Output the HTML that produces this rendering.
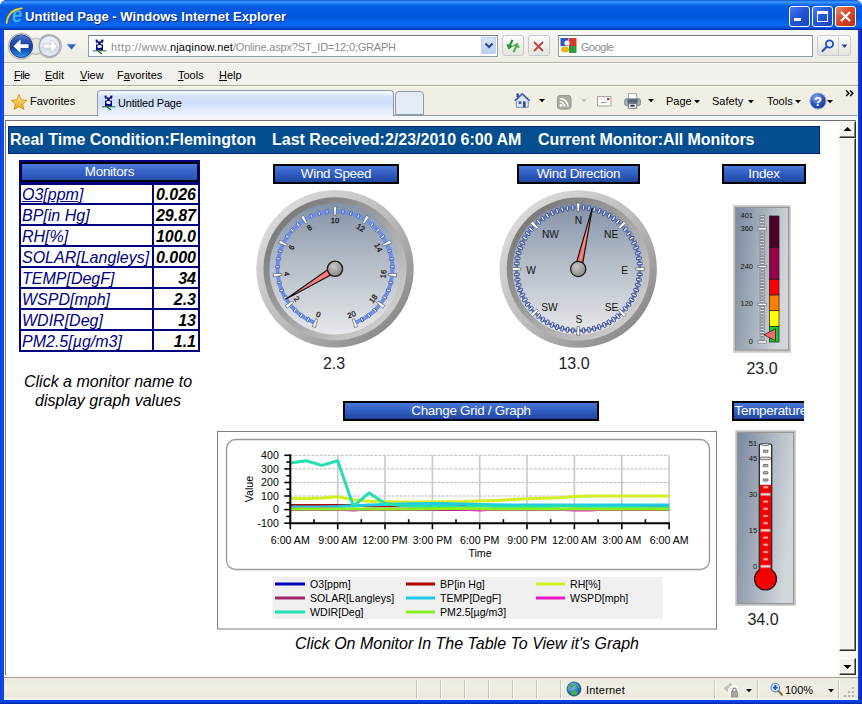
<!DOCTYPE html>
<html>
<head>
<meta charset="utf-8">
<title>Untitled Page - Windows Internet Explorer</title>
<style>
html,body{margin:0;padding:0;}
body{width:862px;height:704px;overflow:hidden;position:relative;background:#fff;font-family:"Liberation Sans",sans-serif;}
.abs{position:absolute;}
#titlebar{left:0;top:0;width:862px;height:30px;background:linear-gradient(to bottom,#0b58d2 0%,#2f8afc 5%,#3a92ff 9%,#1470ee 14%,#055ae2 22%,#0356e0 55%,#0560ea 68%,#0868f2 84%,#0656e0 91%,#0238b4 97%,#0030a0 100%);}
#titletext{left:25px;top:9px;color:#fff;font-weight:bold;font-size:13.5px;letter-spacing:0;transform-origin:0 0;transform:scaleX(0.97);white-space:nowrap;text-shadow:1px 1px 0 #0a2a80;}
#navbar{left:4px;top:30px;width:854px;height:32px;background:linear-gradient(#f8f7f3,#f0efe8 60%,#edece3);}
#menubar{left:4px;top:62px;width:854px;height:24px;background:#f2f1eb;}
#tabbar{left:4px;top:86px;width:854px;height:33px;background:#f1efe4;}
#lborder{left:0;top:30px;width:4px;height:674px;background:linear-gradient(to right,#0a3cd8 0%,#0e4cea 40%,#0c46e4 100%);}
#rborder{left:858px;top:30px;width:4px;height:674px;background:linear-gradient(to right,#0b46e2 0%,#0838d2 55%,#001c9c 100%);}
#bborder{left:0;top:700px;width:862px;height:4px;background:linear-gradient(to bottom,#0b4aec,#0a3ad8 60%,#06249c);}
#statusbar{left:4px;top:676px;width:854px;height:24px;background:linear-gradient(to bottom,#ebe9dc,#f0eee3 50%,#ebe8d9);}
#content{left:6px;top:121px;width:833px;height:555px;background:#fff;overflow:hidden;}
#scroll{left:839px;top:121px;width:17px;height:555px;background:#f4f3ee;}
.t11{font-size:11px;color:#000;white-space:nowrap;}
#hdr{left:8px;top:126px;width:812px;height:28px;box-sizing:border-box;border:1px solid #07247e;background:#054e90;color:#fff;font-weight:bold;font-size:16px;white-space:nowrap;}
.btn{background:linear-gradient(to bottom,#4a78d8 0%,#2f5cc0 50%,#20479f 100%);border:2px solid #000;color:#fff;font-size:13.4px;letter-spacing:-0.25px;text-align:center;box-sizing:border-box;white-space:nowrap;}
.mon{box-sizing:border-box;padding-left:1px;background:#fff;font-style:italic;font-size:16px;line-height:20px;color:#000080;white-space:nowrap;overflow:hidden;}
.mon a{text-decoration:none;color:#000080;}
.mon.u a{text-decoration:underline;}
.val{background:#fff;font-style:italic;font-weight:bold;font-size:16px;line-height:20px;color:#000;text-align:right;white-space:nowrap;box-sizing:border-box;padding-right:2px;}
</style>
</head>
<body>
<div id="titlebar" class="abs"></div>
<div id="titletext" class="abs">Untitled Page - Windows Internet Explorer</div>
<svg class="abs" style="left:5px;top:6px;" width="19" height="20" viewBox="0 0 19 20"><text x="0" y="0" transform="translate(11.300 16.200) scale(0.820 1) skewX(-8)" font-family="Liberation Sans, sans-serif" font-weight="bold" font-size="22.500" fill="#3fb0f6" text-anchor="middle">e</text><path d="M1.700 16.800 Q3 4 16.700 2.300" fill="none" stroke="#8a7a20" stroke-width="2.600" stroke-linecap="round" opacity="0.700"/><path d="M1.700 16.800 Q3 4 16.700 2.300" fill="none" stroke="#e6d23c" stroke-width="1.700" stroke-linecap="round"/></svg>
<svg class="abs" style="left:0;top:0;" width="6" height="6"><path d="M0 0 H5 Q1 1 0 5 Z" fill="#fff"/></svg>
<svg class="abs" style="left:856px;top:0;" width="6" height="6"><path d="M6 0 H1 Q5 1 6 5 Z" fill="#fff"/></svg>
<div id="lborder" class="abs"></div>
<div id="rborder" class="abs"></div>
<div id="navbar" class="abs"></div>
<div id="menubar" class="abs"></div>
<div id="tabbar" class="abs"></div>

<!-- NAV BAR -->
<div class="abs" style="left:4px;top:62px;width:854px;height:1px;background:#b4b1a4;"></div><div class="abs" style="left:4px;top:63px;width:854px;height:1px;background:#fbfbf8;"></div>
<div class="abs" style="left:4px;top:85px;width:854px;height:1px;background:#aca99c;"></div><div class="abs" style="left:4px;top:86px;width:854px;height:1px;background:#fbfbf8;"></div>
<svg class="abs" style="left:6px;top:32px;" width="80" height="30" viewBox="0 0 80 30">
  <defs>
    <linearGradient id="bk" x1="0" y1="0" x2="0" y2="1"><stop offset="0" stop-color="#5a80cc"/><stop offset="0.25" stop-color="#2a52b0"/><stop offset="0.55" stop-color="#12409c"/><stop offset="0.8" stop-color="#1c6cd0"/><stop offset="1" stop-color="#3aa4f4"/></linearGradient>
    <linearGradient id="fw" x1="0" y1="0" x2="0" y2="1"><stop offset="0" stop-color="#f2f5f8"/><stop offset="0.5" stop-color="#dfe5ec"/><stop offset="0.55" stop-color="#d2dbe4"/><stop offset="1" stop-color="#e4eef6"/></linearGradient>
  </defs>
  <path d="M2.500 14.200 A12.700 12.700 0 0 1 26 7.500 Q30 4.500 34 7.500 A12 12 0 0 1 55.500 14.200 A12 12 0 0 1 34 21 Q30 24 26 21 A12.700 12.700 0 0 1 2.500 14.200Z" fill="#e6e6e1" stroke="#b4b5b2" stroke-width="1.200"/>
  <circle cx="15.300" cy="14.200" r="11.300" fill="url(#bk)" stroke="#23408a" stroke-width="1"/>
  <path d="M7.500 14.200 L14.500 7.500 L14.500 12.300 L22.500 12.300 L22.500 16.100 L14.500 16.100 L14.500 20.900 Z" fill="#fff"/>
  <circle cx="43.600" cy="14.200" r="10.500" fill="url(#fw)" stroke="#a2abb6" stroke-width="1.200"/>
  <path d="M51.500 14.200 L45 8 L45 12.400 L37.500 12.400 L37.500 16 L45 16 L45 20.400 Z" fill="#fff" stroke="#c0c8d2" stroke-width="0.700"/>
  <path d="M61 12.300 L70 12.300 L65.500 17.500 Z" fill="#2c64b4" stroke="#7aa0d8" stroke-width="0.600"/>
</svg>
<div class="abs" style="left:88px;top:35px;width:410px;height:22px;box-sizing:border-box;border:1px solid #8e9aa8;border-top-color:#6f7d8d;background:#fff;"></div>
<div id="owl1" class="abs" style="left:93px;top:38px;width:14px;height:16px;"><svg width="14" height="16" viewBox="0 0 14 16"><rect x="3" y="2" width="7" height="10.500" fill="#06068a"/><rect x="2.600" y="1.600" width="2" height="2" fill="#06068a"/><rect x="8.400" y="1.600" width="2" height="2" fill="#000030"/><rect x="4.600" y="1.800" width="3.600" height="1.600" fill="#e8e8ff"/><rect x="3.200" y="4.600" width="2" height="2" fill="#f0f0ff"/><rect x="7.800" y="4.600" width="2" height="2" fill="#f0f0ff"/><ellipse cx="6.500" cy="8.500" rx="2.300" ry="1.500" fill="#fff"/><rect x="0" y="12.300" width="13.500" height="1" fill="#1d6b2a"/><path d="M5 13 L9 16" stroke="#1d6b2a" stroke-width="1.200"/></svg></div>
<div class="abs t11" style="left:111px;top:41px;font-size:11px;color:#8c8c8c;"><span style="letter-spacing:0.47px">http://www.</span><span style="color:#000;letter-spacing:0.15px">njaqinow.net</span><span style="letter-spacing:-0.19px">/Online.aspx?ST_ID=12;0;GRAPH</span></div>
<div class="abs" style="left:481px;top:37px;width:15px;height:17px;background:linear-gradient(#d6e2f8,#bccff4);border:1px solid #c2d2f0;box-sizing:border-box;"></div>
<svg class="abs" style="left:484px;top:42px;" width="10" height="8"><path d="M1.5 1.5 L5 5 L8.5 1.5" fill="none" stroke="#27458f" stroke-width="2"/></svg>
<div class="abs" style="left:502px;top:35px;width:22px;height:21px;box-sizing:border-box;border:1px solid #c5c9d0;border-radius:3px;background:linear-gradient(#fbfbf9,#e6e6e0);"></div>
<svg class="abs" style="left:505px;top:38px;" width="16" height="16" viewBox="0 0 16 16"><path d="M6.500 1.500 L4 6.500 L1.200 6 L3.500 11.500 L8.500 8 L6 7.300 L8.500 2.500 Z" fill="#2e8f3a"/><path d="M9.500 14.500 L12 9.500 L14.800 10 L12.500 4.500 L7.500 8 L10 8.700 L7.500 13.500 Z" fill="#4db14f"/></svg>
<div class="abs" style="left:528px;top:35px;width:22px;height:21px;box-sizing:border-box;border:1px solid #c5c9d0;border-radius:3px;background:linear-gradient(#fbfbf9,#e6e6e0);"></div>
<svg class="abs" style="left:532px;top:40px;" width="14" height="13"><path d="M2 2 L11 11 M11 2 L2 11" stroke="#c24646" stroke-width="1.900" fill="none"/></svg>
<div class="abs" style="left:558px;top:35px;width:255px;height:22px;box-sizing:border-box;border:1px solid #8e9aa8;border-top-color:#6f7d8d;background:#fff;"></div>
<svg class="abs" style="left:560px;top:37px;" width="17" height="17" viewBox="0 0 17 17"><rect x="0" y="0" width="17" height="17" fill="#fff"/><rect x="0.5" y="1" width="8" height="8" fill="#2f58c8"/><rect x="9" y="1" width="7.5" height="8" fill="#d8392b"/><rect x="9" y="9" width="7.5" height="7" fill="#2f9a3e"/><ellipse cx="5" cy="12.5" rx="4" ry="3" fill="#eeb211"/><circle cx="7" cy="6" r="2.6" fill="#fff"/></svg>
<div class="abs t11" style="left:581px;top:41px;color:#8c8c8c;letter-spacing:-0.5px;">Google</div>
<div class="abs" style="left:817px;top:35px;width:34px;height:21px;box-sizing:border-box;border:1px solid #c9ccd2;border-radius:3px;background:linear-gradient(#fbfbf9,#e4e4de);"></div>
<div class="abs" style="left:838px;top:37px;width:1px;height:18px;background:#c9ccd2;"></div>
<svg class="abs" style="left:820px;top:38px;" width="16" height="16" viewBox="0 0 16 16"><circle cx="9.500" cy="6" r="3.600" fill="#d8ecfb" stroke="#2a4fb0" stroke-width="1.800"/><path d="M7 8.500 L2.500 13" stroke="#2a4fb0" stroke-width="2.200" stroke-linecap="round"/></svg>
<svg class="abs" style="left:841px;top:44px;" width="8" height="5"><path d="M0.500 0.500 L6.500 0.500 L3.500 4 Z" fill="#27458f"/></svg>

<!-- MENU BAR -->
<div class="abs t11" style="left:14px;top:69px;letter-spacing:-0.5px;"><u>F</u>ile</div>
<div class="abs t11" style="left:45px;top:69px;"><u>E</u>dit</div>
<div class="abs t11" style="left:80px;top:69px;"><u>V</u>iew</div>
<div class="abs t11" style="left:117px;top:69px;">F<u>a</u>vorites</div>
<div class="abs t11" style="left:178px;top:69px;"><u>T</u>ools</div>
<div class="abs t11" style="left:219px;top:69px;"><u>H</u>elp</div>

<!-- TAB BAR -->
<svg class="abs" style="left:10px;top:93px;" width="18" height="18" viewBox="0 0 18 18"><defs><linearGradient id="st" x1="0" y1="0" x2="0" y2="1"><stop offset="0" stop-color="#ffe98a"/><stop offset="1" stop-color="#f0a010"/></linearGradient></defs><path d="M9 1.500 L11.300 6.800 L17 7.300 L12.700 11 L14 16.500 L9 13.600 L4 16.500 L5.300 11 L1 7.300 L6.700 6.800 Z" fill="url(#st)" stroke="#d08a10" stroke-width="0.800"/></svg>
<div class="abs t11" style="left:30px;top:95px;">Favorites</div>
<div class="abs" style="left:97px;top:90px;width:297px;height:30px;box-sizing:border-box;border:1px solid #8f9bab;border-bottom:none;border-radius:4px 4px 0 0;background:linear-gradient(#f8fbff 0%,#d6e4f9 18%,#cfdff8 42%,#e6eefb 72%,#f6f9fe 100%);"></div>
<div id="owl2" class="abs" style="left:102px;top:94px;width:14px;height:16px;"><svg width="14" height="16" viewBox="0 0 14 16"><rect x="3" y="2" width="7" height="10.500" fill="#06068a"/><rect x="2.600" y="1.600" width="2" height="2" fill="#06068a"/><rect x="8.400" y="1.600" width="2" height="2" fill="#000030"/><rect x="4.600" y="1.800" width="3.600" height="1.600" fill="#e8e8ff"/><rect x="3.200" y="4.600" width="2" height="2" fill="#f0f0ff"/><rect x="7.800" y="4.600" width="2" height="2" fill="#f0f0ff"/><ellipse cx="6.500" cy="8.500" rx="2.300" ry="1.500" fill="#fff"/><rect x="0" y="12.300" width="13.500" height="1" fill="#1d6b2a"/><path d="M5 13 L9 16" stroke="#1d6b2a" stroke-width="1.200"/></svg></div>
<div class="abs t11" style="left:118px;top:97px;letter-spacing:-0.18px;">Untitled Page</div>
<div class="abs" style="left:395px;top:91px;width:29px;height:24px;box-sizing:border-box;border:1px solid #8f9bab;border-radius:4px 4px 0 0;background:#e4ecf6;"></div>
<div class="abs" style="left:4px;top:115px;width:93px;height:1px;background:#8f9bab;"></div>
<div class="abs" style="left:394px;top:115px;width:463px;height:1px;background:#8f9bab;"></div>
<div class="abs" style="left:4px;top:116px;width:854px;height:4px;background:#f4f6fa;"></div>
<div class="abs" style="left:5px;top:120px;width:851px;height:1px;background:#6e6e6a;"></div><div class="abs" style="left:5px;top:120px;width:1px;height:556px;background:#7a7a76;"></div>
<div id="content" class="abs"></div>
<div id="scroll" class="abs"></div>
<div id="statusbar" class="abs"></div>
<div id="bborder" class="abs"></div>

<!-- WINDOW BUTTONS -->
<div class="abs" style="left:789px;top:6px;width:21px;height:21px;box-sizing:border-box;border:1px solid #fff;border-radius:3px;background:linear-gradient(135deg,#4a7cf0 0%,#2456d8 45%,#1a44bc 100%);"></div>
<div class="abs" style="left:794px;top:18px;width:7px;height:3px;background:#fff;"></div>
<div class="abs" style="left:812px;top:6px;width:21px;height:21px;box-sizing:border-box;border:1px solid #fff;border-radius:3px;background:linear-gradient(135deg,#4a7cf0 0%,#2456d8 45%,#1a44bc 100%);"></div>
<div class="abs" style="left:817px;top:11px;width:11px;height:11px;box-sizing:border-box;border:1px solid #fff;border-top-width:3px;"></div>
<div class="abs" style="left:835px;top:6px;width:21px;height:21px;box-sizing:border-box;border:1px solid #fff;border-radius:3px;background:linear-gradient(135deg,#ee8866 0%,#d8492a 45%,#b8300f 100%);"></div>
<svg class="abs" style="left:839px;top:10px;" width="13" height="13"><path d="M2 2 L11 11 M11 2 L2 11" stroke="#fff" stroke-width="2.200" fill="none"/></svg>

<!-- COMMAND BAR -->
<svg class="abs" style="left:514px;top:92px;" width="16.500" height="17" viewBox="0 0 18 18"><path d="M2.500 9 L9 2.500 L15.500 9 L15.500 16.500 L2.500 16.500 Z" fill="#dde7f1" stroke="#6f87b2" stroke-width="1"/><path d="M0.800 9.300 L9 1.500 L17.200 9.300" fill="none" stroke="#2f4fa6" stroke-width="1.500"/><rect x="2.800" y="1.200" width="2.400" height="4" fill="#2b3f9a"/><rect x="9.800" y="10" width="2.800" height="6.500" fill="#2a4a9c"/><rect x="5" y="9.800" width="3" height="3" fill="#4a5f98"/></svg>
<svg class="abs" style="left:538px;top:98px;" width="8" height="5"><path d="M1 1 L7 1 L4 4.200 Z" fill="#000"/></svg>

<svg class="abs" style="left:557px;top:95px;" width="14.500" height="14.500" viewBox="0 0 16 16"><rect x="0.500" y="0.500" width="15" height="15" rx="3" fill="#a9a9a1" stroke="#8f8f88"/><circle cx="4.500" cy="11.500" r="1.600" fill="#fff"/><path d="M3 7.500 A5.500 5.500 0 0 1 8.500 13" fill="none" stroke="#fff" stroke-width="1.700"/><path d="M3 3.800 A9.200 9.200 0 0 1 12.200 13" fill="none" stroke="#fff" stroke-width="1.700"/></svg>
<svg class="abs" style="left:580px;top:98px;" width="8" height="5"><path d="M1 1 L7 1 L4 4.200 Z" fill="#c4c2b6"/></svg>

<svg class="abs" style="left:597px;top:96px;" width="15" height="11" viewBox="0 0 15 11"><rect x="0.500" y="0.500" width="13.500" height="9.500" fill="#fafafa" stroke="#a8a8a2"/><rect x="10" y="1.800" width="2.400" height="2.400" fill="#b83c3c"/><path d="M4 6.500 L9.500 6.500" stroke="#888" stroke-width="0.900"/><path d="M1 1 L6 4.500" stroke="#e4c8c8" stroke-width="0.700"/></svg>
<svg class="abs" style="left:623.500px;top:92px;" width="17.500" height="18" viewBox="0 0 18 18"><rect x="4.500" y="1.500" width="8.500" height="6" fill="#fff" stroke="#9aa2ae" stroke-width="1"/><rect x="0.800" y="6.800" width="16" height="6.700" rx="1.500" fill="#a9b2be" stroke="#6a7482" stroke-width="0.900"/><rect x="3.500" y="7.200" width="10.600" height="3.600" fill="#58606c"/><rect x="4.500" y="11.500" width="8.500" height="5" fill="#fff" stroke="#6a7482" stroke-width="1"/><rect x="6.500" y="12.800" width="4.500" height="2" fill="#2a2e36"/></svg>
<svg class="abs" style="left:647px;top:98px;" width="8" height="5"><path d="M1 1 L7 1 L4 4.200 Z" fill="#000"/></svg>

<div class="abs t11" style="left:666px;top:95px;">Page</div>
<svg class="abs" style="left:693px;top:99px;" width="8" height="5"><path d="M1 1 L7 1 L4 4.200 Z" fill="#000"/></svg>

<div class="abs t11" style="left:712px;top:95px;">Safety</div>
<svg class="abs" style="left:747px;top:99px;" width="8" height="5"><path d="M1 1 L7 1 L4 4.200 Z" fill="#000"/></svg>

<div class="abs t11" style="left:767px;top:95px;">Tools</div>
<svg class="abs" style="left:794px;top:99px;" width="8" height="5"><path d="M1 1 L7 1 L4 4.200 Z" fill="#000"/></svg>

<svg class="abs" style="left:809px;top:92px;" width="18" height="18" viewBox="0 0 18 18"><defs><radialGradient id="hp" cx="40%" cy="30%" r="70%"><stop offset="0" stop-color="#8fb0f0"/><stop offset="0.600" stop-color="#2f56c0"/><stop offset="1" stop-color="#1a3690"/></radialGradient></defs><circle cx="9" cy="9" r="8" fill="url(#hp)" stroke="#8a9fd0" stroke-width="1"/><text x="9" y="13.500" font-family="Liberation Sans, sans-serif" font-weight="bold" font-size="13" fill="#fff" text-anchor="middle">?</text></svg>
<svg class="abs" style="left:826px;top:99px;" width="8" height="5"><path d="M1 1 L7 1 L4 4.200 Z" fill="#000"/></svg>

<svg class="abs" style="left:845px;top:89px;" width="10" height="9" viewBox="0 0 10 9"><path d="M1.200 1.500 L3.800 4.200 L1.200 7 M5.200 1.500 L7.800 4.200 L5.200 7" fill="none" stroke="#000" stroke-width="1.500"/></svg>

<!-- STATUS BAR -->
<div class="abs" style="left:4px;top:675px;width:854px;height:2px;background:#fbfaf6;"></div>
<div class="abs" style="left:4px;top:677px;width:854px;height:1px;background:#a6a396;"></div><div class="abs" style="left:4px;top:698px;width:854px;height:2px;background:#f8f7f2;"></div>
<div class="abs" style="left:416px;top:680px;width:1px;height:18px;background:#c5c2b3;"></div><div class="abs" style="left:417px;top:680px;width:1px;height:18px;background:#fff;"></div>
<div class="abs" style="left:440px;top:680px;width:1px;height:18px;background:#c5c2b3;"></div><div class="abs" style="left:441px;top:680px;width:1px;height:18px;background:#fff;"></div>
<div class="abs" style="left:464px;top:680px;width:1px;height:18px;background:#c5c2b3;"></div><div class="abs" style="left:465px;top:680px;width:1px;height:18px;background:#fff;"></div>
<div class="abs" style="left:488px;top:680px;width:1px;height:18px;background:#c5c2b3;"></div><div class="abs" style="left:489px;top:680px;width:1px;height:18px;background:#fff;"></div>
<div class="abs" style="left:512px;top:680px;width:1px;height:18px;background:#c5c2b3;"></div><div class="abs" style="left:513px;top:680px;width:1px;height:18px;background:#fff;"></div>
<div class="abs" style="left:536px;top:680px;width:1px;height:18px;background:#c5c2b3;"></div><div class="abs" style="left:537px;top:680px;width:1px;height:18px;background:#fff;"></div>
<div class="abs" style="left:560px;top:680px;width:1px;height:18px;background:#c5c2b3;"></div><div class="abs" style="left:561px;top:680px;width:1px;height:18px;background:#fff;"></div>
<div class="abs" style="left:714px;top:680px;width:1px;height:18px;background:#c5c2b3;"></div><div class="abs" style="left:715px;top:680px;width:1px;height:18px;background:#fff;"></div>
<div class="abs" style="left:757px;top:680px;width:1px;height:18px;background:#c5c2b3;"></div><div class="abs" style="left:758px;top:680px;width:1px;height:18px;background:#fff;"></div>

<svg class="abs" style="left:566px;top:681px;" width="16" height="16" viewBox="0 0 16 16"><defs><radialGradient id="gl" cx="35%" cy="30%" r="75%"><stop offset="0" stop-color="#9fd0f8"/><stop offset="0.600" stop-color="#2a78c8"/><stop offset="1" stop-color="#124a90"/></radialGradient></defs><circle cx="8" cy="8" r="7" fill="url(#gl)" stroke="#1a4a88" stroke-width="0.800"/><path d="M3.500 4 Q6 2 8.500 3.500 Q9 5.500 7 6.500 Q5 7 4.500 8.500 Q2.500 7 3.500 4Z M5 10.500 Q8 8.500 11.500 10 Q12.500 12 10.500 13.800 Q7 15 5 13 Q4 12 5 10.500Z M11 4 Q13 5 13.500 7 Q12 7.500 11 6 Z" fill="#3fae52"/></svg>
<div class="abs t11" style="left:586px;top:684px;letter-spacing:0.2px;">Internet</div>
<svg class="abs" style="left:723px;top:682px;" width="17" height="17" viewBox="0 0 17 17"><path d="M1 6.500 L7.500 1.500 L10.500 5 L5 9.500 Z" fill="#c4c4be" stroke="#a9a9a2" stroke-width="0.600"/><circle cx="10.500" cy="8.500" r="5.500" fill="#fbfbf8" opacity="0.900"/><rect x="8.500" y="9.500" width="6" height="5.500" fill="#a6a6a0" stroke="#86867f" stroke-width="0.700"/><path d="M9.800 9.500 V7.800 A1.700 1.700 0 0 1 13.200 7.800 V9.500" fill="none" stroke="#86867f" stroke-width="1.200"/></svg>
<svg class="abs" style="left:745px;top:688px;" width="8" height="5"><path d="M1 1 L7 1 L4 4.200 Z" fill="#000"/></svg>

<svg class="abs" style="left:770px;top:682px;" width="14" height="14" viewBox="0 0 14 14"><circle cx="5.300" cy="5.600" r="4.300" fill="#dcecfb" stroke="#5c86c8" stroke-width="1.100"/><path d="M8.500 9 L12 12.800" stroke="#8a6a3c" stroke-width="2" stroke-linecap="round"/><path d="M2.800 5.600 H7.800 M5.300 3.100 V8.100" stroke="#1f58b8" stroke-width="1.900"/></svg>
<div class="abs t11" style="left:785px;top:684px;">100%</div>
<svg class="abs" style="left:827px;top:688px;" width="8" height="5"><path d="M1 1 L7 1 L4 4.200 Z" fill="#000"/></svg>

<div class="abs" style="left:838px;top:680px;width:1px;height:18px;background:#c5c2b3;"></div><div class="abs" style="left:839px;top:680px;width:1px;height:18px;background:#fff;"></div>
<svg class="abs" style="left:843px;top:686px;" width="13" height="13" viewBox="0 0 13 13"><g fill="#b8b5a6"><rect x="9" y="1" width="2" height="2"/><rect x="5" y="5" width="2" height="2"/><rect x="9" y="5" width="2" height="2"/><rect x="1" y="9" width="2" height="2"/><rect x="5" y="9" width="2" height="2"/><rect x="9" y="9" width="2" height="2"/></g></svg>

<div id="hdr" class="abs"><span class="abs" style="left:1px;top:4px;">Real Time Condition:Flemington</span><span class="abs" style="left:263px;top:4px;">Last Received:2/23/2010 6:00 AM</span><span class="abs" style="left:529px;top:4px;letter-spacing:-0.08px;">Current Monitor:All Monitors</span></div>
<!-- MONITORS TABLE -->
<div class="abs" style="left:19px;top:160px;width:181px;height:192px;background:#000080;"></div>
<div class="abs" style="left:21px;top:162px;width:177px;height:20px;box-sizing:border-box;border:2px solid #000;border-left-width:1px;border-right-width:1px;background:linear-gradient(to bottom,#4c7add 0%,#3a66cc 40%,#2750b4 100%);color:#fff;font-size:13.4px;letter-spacing:-0.25px;text-align:center;line-height:16px;">Monitors</div>
<div class="abs mon u" style="left:21px;top:185px;width:131px;height:18px;line-height:20px;"><a>O3[ppm]</a></div>
<div class="abs val" style="left:154px;top:185px;width:44px;height:18px;line-height:20px;">0.026</div>
<div class="abs mon" style="left:21px;top:205px;width:131px;height:19px;line-height:22px;"><a>BP[in Hg]</a></div>
<div class="abs val" style="left:154px;top:205px;width:44px;height:19px;line-height:22px;">29.87</div>
<div class="abs mon" style="left:21px;top:226px;width:131px;height:19px;line-height:22px;"><a>RH[%]</a></div>
<div class="abs val" style="left:154px;top:226px;width:44px;height:19px;line-height:22px;">100.0</div>
<div class="abs mon" style="left:21px;top:247px;width:131px;height:19px;line-height:22px;"><a>SOLAR[Langleys]</a></div>
<div class="abs val" style="left:154px;top:247px;width:44px;height:19px;line-height:22px;">0.000</div>
<div class="abs mon" style="left:21px;top:268px;width:131px;height:19px;line-height:22px;"><a>TEMP[DegF]</a></div>
<div class="abs val" style="left:154px;top:268px;width:44px;height:19px;line-height:22px;">34</div>
<div class="abs mon" style="left:21px;top:289px;width:131px;height:19px;line-height:22px;"><a>WSPD[mph]</a></div>
<div class="abs val" style="left:154px;top:289px;width:44px;height:19px;line-height:22px;">2.3</div>
<div class="abs mon" style="left:21px;top:310px;width:131px;height:19px;line-height:22px;"><a>WDIR[Deg]</a></div>
<div class="abs val" style="left:154px;top:310px;width:44px;height:19px;line-height:22px;">13</div>
<div class="abs mon" style="left:21px;top:331px;width:131px;height:19px;line-height:22px;"><a>PM2.5[µg/m3]</a></div>
<div class="abs val" style="left:154px;top:331px;width:44px;height:19px;line-height:22px;">1.1</div>
<div class="abs" style="left:8px;top:372px;width:200px;text-align:center;font-style:italic;font-size:16px;line-height:19px;color:#000;">Click a monitor name to<br>display graph values</div>
<div class="abs btn" style="left:273px;top:164px;width:126px;height:20px;line-height:16px;">Wind Speed</div>
<div class="abs btn" style="left:517px;top:164px;width:123px;height:20px;line-height:16px;">Wind Direction</div>
<div class="abs btn" style="left:722px;top:164px;width:84px;height:20px;line-height:16px;">Index</div>
<div class="abs btn" style="left:343px;top:401px;width:256px;height:20px;line-height:16px;">Change Grid / Graph</div>
<div class="abs btn" style="left:732px;top:401px;width:72px;height:20px;line-height:16px;overflow:hidden;text-align:left;border-width:2px 0 2px 2px;text-indent:0.5px;">Temperature</div>
<div class="abs" style="left:304px;top:354px;width:60px;text-align:center;font-size:16px;line-height:20px;color:#222;">2.3</div>
<div class="abs" style="left:544px;top:354px;width:60px;text-align:center;font-size:16px;line-height:20px;color:#222;">13.0</div>
<div class="abs" style="left:732px;top:359px;width:60px;text-align:center;font-size:16px;line-height:20px;color:#222;">23.0</div>
<div class="abs" style="left:733px;top:609.5px;width:60px;text-align:center;font-size:16px;line-height:20px;color:#222;">34.0</div>
<svg class="abs" style="left:250px;top:185px;" width="170" height="170" viewBox="0 0 170 170"><defs>
<linearGradient id="bez" x1="0" y1="0" x2="1" y2="1"><stop offset="0.1" stop-color="#dcdcdc"/><stop offset="0.5" stop-color="#bcbcbc"/><stop offset="0.9" stop-color="#868686"/></linearGradient>
<linearGradient id="bez2" x1="0" y1="0" x2="1" y2="1"><stop offset="0.1" stop-color="#767676"/><stop offset="0.5" stop-color="#a2a2a2"/><stop offset="0.9" stop-color="#d2d2d2"/></linearGradient>
<linearGradient id="face" x1="0" y1="0" x2="0" y2="1"><stop offset="0" stop-color="#8392a8"/><stop offset="0.45" stop-color="#b4bcc7"/><stop offset="1" stop-color="#e6e8ea"/></linearGradient>
<radialGradient id="hub" cx="40%" cy="35%" r="65%"><stop offset="0" stop-color="#c8c8c8"/><stop offset="1" stop-color="#8a8a8a"/></radialGradient>
<linearGradient id="ndl" x1="0" y1="0" x2="1" y2="0"><stop offset="0" stop-color="#e83a3a"/><stop offset="0.5" stop-color="#ff8a8a"/><stop offset="1" stop-color="#e83a3a"/></linearGradient>
</defs><circle cx="85.0" cy="83.8" r="78.7" fill="url(#bez)"/><circle cx="85.0" cy="83.8" r="71.5" fill="url(#bez2)"/><circle cx="85.0" cy="83.8" r="65.6" fill="url(#face)"/><path d="M65.3 137.8 A57.5 57.5 0 1 1 104.7 137.8" fill="none" stroke="#6f8fe6" stroke-width="4"/><polygon points="67.6,134.4 65.8,133.7 62.2,141.5 65.4,142.6" fill="#ffffff" stroke="#555c66" stroke-width="0.7"/><polygon points="59.8,133.2 58.1,132.4 56.2,135.9 57.9,136.8" fill="#f0f3fc" stroke="#3f55a8" stroke-width="0.8"/><polygon points="53.1,129.3 51.6,128.1 49.3,131.4 50.8,132.5" fill="#f0f3fc" stroke="#3f55a8" stroke-width="0.8"/><polygon points="47.1,124.4 45.8,123.1 43.0,125.9 44.4,127.3" fill="#f0f3fc" stroke="#3f55a8" stroke-width="0.8"/><polygon points="43.5,117.5 42.2,115.9 35.1,120.6 37.2,123.3" fill="#ffffff" stroke="#555c66" stroke-width="0.7"/><polygon points="37.4,112.4 36.5,110.7 33.0,112.7 33.9,114.4" fill="#f0f3fc" stroke="#3f55a8" stroke-width="0.8"/><polygon points="33.9,105.5 33.2,103.7 29.5,105.2 30.2,107.0" fill="#f0f3fc" stroke="#3f55a8" stroke-width="0.8"/><polygon points="31.4,98.1 30.9,96.3 27.0,97.3 27.5,99.1" fill="#f0f3fc" stroke="#3f55a8" stroke-width="0.8"/><polygon points="31.9,90.4 31.7,88.4 23.2,88.6 23.5,92.0" fill="#ffffff" stroke="#555c66" stroke-width="0.7"/><polygon points="29.5,82.8 29.6,80.9 25.6,80.8 25.5,82.7" fill="#f0f3fc" stroke="#3f55a8" stroke-width="0.8"/><polygon points="30.2,75.1 30.5,73.2 26.6,72.5 26.2,74.4" fill="#f0f3fc" stroke="#3f55a8" stroke-width="0.8"/><polygon points="31.9,67.6 32.5,65.7 28.7,64.5 28.1,66.3" fill="#f0f3fc" stroke="#3f55a8" stroke-width="0.8"/><polygon points="36.5,61.2 37.4,59.4 30.0,55.1 28.5,58.1" fill="#ffffff" stroke="#555c66" stroke-width="0.7"/><polygon points="38.5,53.6 39.5,52.0 36.2,49.7 35.1,51.3" fill="#f0f3fc" stroke="#3f55a8" stroke-width="0.8"/><polygon points="43.1,47.4 44.4,46.0 41.4,43.3 40.1,44.7" fill="#f0f3fc" stroke="#3f55a8" stroke-width="0.8"/><polygon points="48.6,41.9 50.1,40.7 47.5,37.6 46.0,38.8" fill="#f0f3fc" stroke="#3f55a8" stroke-width="0.8"/><polygon points="55.8,39.0 57.5,37.9 53.6,30.3 50.7,32.1" fill="#ffffff" stroke="#555c66" stroke-width="0.7"/><polygon points="61.6,33.5 63.3,32.7 61.7,29.1 59.9,29.8" fill="#f0f3fc" stroke="#3f55a8" stroke-width="0.8"/><polygon points="68.8,30.7 70.6,30.2 69.5,26.3 67.7,26.9" fill="#f0f3fc" stroke="#3f55a8" stroke-width="0.8"/><polygon points="76.3,29.0 78.2,28.7 77.7,24.7 75.8,25.0" fill="#f0f3fc" stroke="#3f55a8" stroke-width="0.8"/><polygon points="84.0,30.3 86.0,30.3 86.7,21.8 83.3,21.8" fill="#ffffff" stroke="#555c66" stroke-width="0.7"/><polygon points="91.8,28.7 93.7,29.0 94.2,25.0 92.3,24.7" fill="#f0f3fc" stroke="#3f55a8" stroke-width="0.8"/><polygon points="99.4,30.2 101.2,30.7 102.3,26.9 100.5,26.3" fill="#f0f3fc" stroke="#3f55a8" stroke-width="0.8"/><polygon points="106.7,32.7 108.4,33.5 110.1,29.8 108.3,29.1" fill="#f0f3fc" stroke="#3f55a8" stroke-width="0.8"/><polygon points="112.5,37.9 114.2,39.0 119.3,32.1 116.4,30.3" fill="#ffffff" stroke="#555c66" stroke-width="0.7"/><polygon points="119.9,40.7 121.4,41.9 124.0,38.8 122.5,37.6" fill="#f0f3fc" stroke="#3f55a8" stroke-width="0.8"/><polygon points="125.6,46.0 126.9,47.4 129.9,44.7 128.6,43.3" fill="#f0f3fc" stroke="#3f55a8" stroke-width="0.8"/><polygon points="130.5,52.0 131.5,53.6 134.9,51.3 133.8,49.7" fill="#f0f3fc" stroke="#3f55a8" stroke-width="0.8"/><polygon points="132.6,59.4 133.5,61.2 141.5,58.1 140.0,55.1" fill="#ffffff" stroke="#555c66" stroke-width="0.7"/><polygon points="137.5,65.7 138.1,67.6 141.9,66.3 141.3,64.5" fill="#f0f3fc" stroke="#3f55a8" stroke-width="0.8"/><polygon points="139.5,73.2 139.8,75.1 143.8,74.4 143.4,72.5" fill="#f0f3fc" stroke="#3f55a8" stroke-width="0.8"/><polygon points="140.4,80.9 140.5,82.8 144.5,82.7 144.4,80.8" fill="#f0f3fc" stroke="#3f55a8" stroke-width="0.8"/><polygon points="138.3,88.4 138.1,90.4 146.5,92.0 146.8,88.6" fill="#ffffff" stroke="#555c66" stroke-width="0.7"/><polygon points="139.1,96.3 138.6,98.1 142.5,99.1 143.0,97.3" fill="#f0f3fc" stroke="#3f55a8" stroke-width="0.8"/><polygon points="136.8,103.7 136.1,105.5 139.8,107.0 140.5,105.2" fill="#f0f3fc" stroke="#3f55a8" stroke-width="0.8"/><polygon points="133.5,110.7 132.6,112.4 136.1,114.4 137.0,112.7" fill="#f0f3fc" stroke="#3f55a8" stroke-width="0.8"/><polygon points="127.8,115.9 126.5,117.5 132.8,123.3 134.9,120.6" fill="#ffffff" stroke="#555c66" stroke-width="0.7"/><polygon points="124.2,123.1 122.9,124.4 125.6,127.3 127.0,125.9" fill="#f0f3fc" stroke="#3f55a8" stroke-width="0.8"/><polygon points="118.4,128.1 116.9,129.3 119.2,132.5 120.7,131.4" fill="#f0f3fc" stroke="#3f55a8" stroke-width="0.8"/><polygon points="111.9,132.4 110.2,133.2 112.1,136.8 113.8,135.9" fill="#f0f3fc" stroke="#3f55a8" stroke-width="0.8"/><polygon points="104.2,133.7 102.4,134.4 104.6,142.6 107.8,141.5" fill="#ffffff" stroke="#555c66" stroke-width="0.7"/><text x="68.4" y="129.4" transform="rotate(20.0 68.4 129.4)" font-size="7.6" font-family="Liberation Sans, sans-serif" text-anchor="middle" dy="2.7" fill="#111" stroke="#111" stroke-width="0.250">0</text><text x="46.8" y="113.7" transform="rotate(52.0 46.8 113.7)" font-size="7.6" font-family="Liberation Sans, sans-serif" text-anchor="middle" dy="2.7" fill="#111" stroke="#111" stroke-width="0.250">2</text><text x="36.8" y="88.9" transform="rotate(84.0 36.8 88.9)" font-size="7.6" font-family="Liberation Sans, sans-serif" text-anchor="middle" dy="2.7" fill="#111" stroke="#111" stroke-width="0.250">4</text><text x="41.4" y="62.5" transform="rotate(-64.0 41.4 62.5)" font-size="7.6" font-family="Liberation Sans, sans-serif" text-anchor="middle" dy="2.7" fill="#111" stroke="#111" stroke-width="0.250">6</text><text x="59.3" y="42.7" transform="rotate(-32.0 59.3 42.7)" font-size="7.6" font-family="Liberation Sans, sans-serif" text-anchor="middle" dy="2.7" fill="#111" stroke="#111" stroke-width="0.250">8</text><text x="85.0" y="35.3" transform="rotate(0.0 85.0 35.3)" font-size="7.6" font-family="Liberation Sans, sans-serif" text-anchor="middle" dy="2.7" fill="#111" stroke="#111" stroke-width="0.250">10</text><text x="110.7" y="42.7" transform="rotate(32.0 110.7 42.7)" font-size="7.6" font-family="Liberation Sans, sans-serif" text-anchor="middle" dy="2.7" fill="#111" stroke="#111" stroke-width="0.250">12</text><text x="128.6" y="62.5" transform="rotate(64.0 128.6 62.5)" font-size="7.6" font-family="Liberation Sans, sans-serif" text-anchor="middle" dy="2.7" fill="#111" stroke="#111" stroke-width="0.250">14</text><text x="133.2" y="88.9" transform="rotate(-84.0 133.2 88.9)" font-size="7.6" font-family="Liberation Sans, sans-serif" text-anchor="middle" dy="2.7" fill="#111" stroke="#111" stroke-width="0.250">16</text><text x="123.2" y="113.7" transform="rotate(-52.0 123.2 113.7)" font-size="7.6" font-family="Liberation Sans, sans-serif" text-anchor="middle" dy="2.7" fill="#111" stroke="#111" stroke-width="0.250">18</text><text x="101.6" y="129.4" transform="rotate(-20.0 101.6 129.4)" font-size="7.6" font-family="Liberation Sans, sans-serif" text-anchor="middle" dy="2.7" fill="#111" stroke="#111" stroke-width="0.250">20</text><defs><linearGradient id="ng2383" gradientUnits="userSpaceOnUse" x1="86.84" y1="86.78" x2="83.16" y2="80.82"><stop offset="0" stop-color="#e83838"/><stop offset="0.5" stop-color="#ff8c8c"/><stop offset="1" stop-color="#ee4848"/></linearGradient></defs><polygon points="86.8,86.8 35.7,114.3 83.2,80.8" fill="url(#ng2383)" stroke="#141414" stroke-width="1.200" stroke-linejoin="miter"/><circle cx="85.0" cy="83.8" r="7.6" fill="url(#hub)" stroke="#1a1a1a" stroke-width="1.3"/></svg>
<svg class="abs" style="left:493px;top:185px;" width="170" height="170" viewBox="0 0 170 170"><circle cx="85.2" cy="84.0" r="78.7" fill="url(#bez)"/><circle cx="85.2" cy="84.0" r="71.5" fill="url(#bez2)"/><circle cx="85.2" cy="84.0" r="65.6" fill="url(#face)"/><circle cx="85.2" cy="84.0" r="61.7" fill="none" stroke="#5a72c4" stroke-width="2.8"/><polygon points="84.1,26.5 86.3,26.5 86.9,18.0 83.5,18.0" fill="#ffffff" stroke="#555c66" stroke-width="0.7"/><polygon points="89.3,24.9 91.5,25.1 91.9,20.1 89.7,19.9" fill="#e4e8f2" stroke="#3a4a86" stroke-width="0.9"/><polygon points="94.4,25.5 96.6,25.9 97.4,21.0 95.3,20.6" fill="#e4e8f2" stroke="#3a4a86" stroke-width="0.9"/><polygon points="99.5,26.5 101.6,27.1 102.9,22.3 100.8,21.7" fill="#e4e8f2" stroke="#3a4a86" stroke-width="0.9"/><polygon points="104.4,28.0 106.5,28.7 108.2,24.0 106.1,23.3" fill="#e4e8f2" stroke="#3a4a86" stroke-width="0.9"/><polygon points="109.2,29.9 111.2,30.8 113.3,26.3 111.3,25.4" fill="#e4e8f2" stroke="#3a4a86" stroke-width="0.9"/><polygon points="113.8,32.2 115.8,33.3 118.3,29.0 116.3,27.9" fill="#e4e8f2" stroke="#3a4a86" stroke-width="0.9"/><polygon points="118.3,34.9 120.1,36.1 122.9,32.0 121.1,30.8" fill="#e4e8f2" stroke="#3a4a86" stroke-width="0.9"/><polygon points="122.4,37.9 124.1,39.4 127.3,35.5 125.6,34.1" fill="#e4e8f2" stroke="#3a4a86" stroke-width="0.9"/><polygon points="125.1,42.6 126.6,44.1 133.1,38.5 130.7,36.1" fill="#ffffff" stroke="#555c66" stroke-width="0.7"/><polygon points="129.8,45.1 131.3,46.8 135.1,43.6 133.7,41.9" fill="#e4e8f2" stroke="#3a4a86" stroke-width="0.9"/><polygon points="133.1,49.1 134.3,50.9 138.4,48.1 137.2,46.3" fill="#e4e8f2" stroke="#3a4a86" stroke-width="0.9"/><polygon points="135.9,53.4 137.0,55.4 141.3,52.9 140.2,50.9" fill="#e4e8f2" stroke="#3a4a86" stroke-width="0.9"/><polygon points="138.4,58.0 139.3,60.0 143.8,57.9 142.9,55.9" fill="#e4e8f2" stroke="#3a4a86" stroke-width="0.9"/><polygon points="140.5,62.7 141.2,64.8 145.9,63.1 145.2,61.0" fill="#e4e8f2" stroke="#3a4a86" stroke-width="0.9"/><polygon points="142.1,67.6 142.7,69.7 147.5,68.4 146.9,66.3" fill="#e4e8f2" stroke="#3a4a86" stroke-width="0.9"/><polygon points="143.3,72.6 143.7,74.8 148.6,73.9 148.2,71.8" fill="#e4e8f2" stroke="#3a4a86" stroke-width="0.9"/><polygon points="144.1,77.7 144.3,79.9 149.3,79.5 149.1,77.3" fill="#e4e8f2" stroke="#3a4a86" stroke-width="0.9"/><polygon points="142.7,82.9 142.7,85.1 151.2,85.7 151.2,82.3" fill="#ffffff" stroke="#555c66" stroke-width="0.7"/><polygon points="144.3,88.1 144.1,90.3 149.1,90.7 149.3,88.5" fill="#e4e8f2" stroke="#3a4a86" stroke-width="0.9"/><polygon points="143.7,93.2 143.3,95.4 148.2,96.2 148.6,94.1" fill="#e4e8f2" stroke="#3a4a86" stroke-width="0.9"/><polygon points="142.7,98.3 142.1,100.4 146.9,101.7 147.5,99.6" fill="#e4e8f2" stroke="#3a4a86" stroke-width="0.9"/><polygon points="141.2,103.2 140.5,105.3 145.2,107.0 145.9,104.9" fill="#e4e8f2" stroke="#3a4a86" stroke-width="0.9"/><polygon points="139.3,108.0 138.4,110.0 142.9,112.1 143.8,110.1" fill="#e4e8f2" stroke="#3a4a86" stroke-width="0.9"/><polygon points="137.0,112.6 135.9,114.6 140.2,117.1 141.3,115.1" fill="#e4e8f2" stroke="#3a4a86" stroke-width="0.9"/><polygon points="134.3,117.1 133.1,118.9 137.2,121.7 138.4,119.9" fill="#e4e8f2" stroke="#3a4a86" stroke-width="0.9"/><polygon points="131.3,121.2 129.8,122.9 133.7,126.1 135.1,124.4" fill="#e4e8f2" stroke="#3a4a86" stroke-width="0.9"/><polygon points="126.6,123.9 125.1,125.4 130.7,131.9 133.1,129.5" fill="#ffffff" stroke="#555c66" stroke-width="0.7"/><polygon points="124.1,128.6 122.4,130.1 125.6,133.9 127.3,132.5" fill="#e4e8f2" stroke="#3a4a86" stroke-width="0.9"/><polygon points="120.1,131.9 118.3,133.1 121.1,137.2 122.9,136.0" fill="#e4e8f2" stroke="#3a4a86" stroke-width="0.9"/><polygon points="115.8,134.7 113.8,135.8 116.3,140.1 118.3,139.0" fill="#e4e8f2" stroke="#3a4a86" stroke-width="0.9"/><polygon points="111.2,137.2 109.2,138.1 111.3,142.6 113.3,141.7" fill="#e4e8f2" stroke="#3a4a86" stroke-width="0.9"/><polygon points="106.5,139.3 104.4,140.0 106.1,144.7 108.2,144.0" fill="#e4e8f2" stroke="#3a4a86" stroke-width="0.9"/><polygon points="101.6,140.9 99.5,141.5 100.8,146.3 102.9,145.7" fill="#e4e8f2" stroke="#3a4a86" stroke-width="0.9"/><polygon points="96.6,142.1 94.4,142.5 95.3,147.4 97.4,147.0" fill="#e4e8f2" stroke="#3a4a86" stroke-width="0.9"/><polygon points="91.5,142.9 89.3,143.1 89.7,148.1 91.9,147.9" fill="#e4e8f2" stroke="#3a4a86" stroke-width="0.9"/><polygon points="86.3,141.5 84.1,141.5 83.5,150.0 86.9,150.0" fill="#ffffff" stroke="#555c66" stroke-width="0.7"/><polygon points="81.1,143.1 78.9,142.9 78.5,147.9 80.7,148.1" fill="#e4e8f2" stroke="#3a4a86" stroke-width="0.9"/><polygon points="76.0,142.5 73.8,142.1 73.0,147.0 75.1,147.4" fill="#e4e8f2" stroke="#3a4a86" stroke-width="0.9"/><polygon points="70.9,141.5 68.8,140.9 67.5,145.7 69.6,146.3" fill="#e4e8f2" stroke="#3a4a86" stroke-width="0.9"/><polygon points="66.0,140.0 63.9,139.3 62.2,144.0 64.3,144.7" fill="#e4e8f2" stroke="#3a4a86" stroke-width="0.9"/><polygon points="61.2,138.1 59.2,137.2 57.1,141.7 59.1,142.6" fill="#e4e8f2" stroke="#3a4a86" stroke-width="0.9"/><polygon points="56.6,135.8 54.6,134.7 52.1,139.0 54.1,140.1" fill="#e4e8f2" stroke="#3a4a86" stroke-width="0.9"/><polygon points="52.1,133.1 50.3,131.9 47.5,136.0 49.3,137.2" fill="#e4e8f2" stroke="#3a4a86" stroke-width="0.9"/><polygon points="48.0,130.1 46.3,128.6 43.1,132.5 44.8,133.9" fill="#e4e8f2" stroke="#3a4a86" stroke-width="0.9"/><polygon points="45.3,125.4 43.8,123.9 37.3,129.5 39.7,131.9" fill="#ffffff" stroke="#555c66" stroke-width="0.7"/><polygon points="40.6,122.9 39.1,121.2 35.3,124.4 36.7,126.1" fill="#e4e8f2" stroke="#3a4a86" stroke-width="0.9"/><polygon points="37.3,118.9 36.1,117.1 32.0,119.9 33.2,121.7" fill="#e4e8f2" stroke="#3a4a86" stroke-width="0.9"/><polygon points="34.5,114.6 33.4,112.6 29.1,115.1 30.2,117.1" fill="#e4e8f2" stroke="#3a4a86" stroke-width="0.9"/><polygon points="32.0,110.0 31.1,108.0 26.6,110.1 27.5,112.1" fill="#e4e8f2" stroke="#3a4a86" stroke-width="0.9"/><polygon points="29.9,105.3 29.2,103.2 24.5,104.9 25.2,107.0" fill="#e4e8f2" stroke="#3a4a86" stroke-width="0.9"/><polygon points="28.3,100.4 27.7,98.3 22.9,99.6 23.5,101.7" fill="#e4e8f2" stroke="#3a4a86" stroke-width="0.9"/><polygon points="27.1,95.4 26.7,93.2 21.8,94.1 22.2,96.2" fill="#e4e8f2" stroke="#3a4a86" stroke-width="0.9"/><polygon points="26.3,90.3 26.1,88.1 21.1,88.5 21.3,90.7" fill="#e4e8f2" stroke="#3a4a86" stroke-width="0.9"/><polygon points="27.7,85.1 27.7,82.9 19.2,82.3 19.2,85.7" fill="#ffffff" stroke="#555c66" stroke-width="0.7"/><polygon points="26.1,79.9 26.3,77.7 21.3,77.3 21.1,79.5" fill="#e4e8f2" stroke="#3a4a86" stroke-width="0.9"/><polygon points="26.7,74.8 27.1,72.6 22.2,71.8 21.8,73.9" fill="#e4e8f2" stroke="#3a4a86" stroke-width="0.9"/><polygon points="27.7,69.7 28.3,67.6 23.5,66.3 22.9,68.4" fill="#e4e8f2" stroke="#3a4a86" stroke-width="0.9"/><polygon points="29.2,64.8 29.9,62.7 25.2,61.0 24.5,63.1" fill="#e4e8f2" stroke="#3a4a86" stroke-width="0.9"/><polygon points="31.1,60.0 32.0,58.0 27.5,55.9 26.6,57.9" fill="#e4e8f2" stroke="#3a4a86" stroke-width="0.9"/><polygon points="33.4,55.4 34.5,53.4 30.2,50.9 29.1,52.9" fill="#e4e8f2" stroke="#3a4a86" stroke-width="0.9"/><polygon points="36.1,50.9 37.3,49.1 33.2,46.3 32.0,48.1" fill="#e4e8f2" stroke="#3a4a86" stroke-width="0.9"/><polygon points="39.1,46.8 40.6,45.1 36.7,41.9 35.3,43.6" fill="#e4e8f2" stroke="#3a4a86" stroke-width="0.9"/><polygon points="43.8,44.1 45.3,42.6 39.7,36.1 37.3,38.5" fill="#ffffff" stroke="#555c66" stroke-width="0.7"/><polygon points="46.3,39.4 48.0,37.9 44.8,34.1 43.1,35.5" fill="#e4e8f2" stroke="#3a4a86" stroke-width="0.9"/><polygon points="50.3,36.1 52.1,34.9 49.3,30.8 47.5,32.0" fill="#e4e8f2" stroke="#3a4a86" stroke-width="0.9"/><polygon points="54.6,33.3 56.6,32.2 54.1,27.9 52.1,29.0" fill="#e4e8f2" stroke="#3a4a86" stroke-width="0.9"/><polygon points="59.2,30.8 61.2,29.9 59.1,25.4 57.1,26.3" fill="#e4e8f2" stroke="#3a4a86" stroke-width="0.9"/><polygon points="63.9,28.7 66.0,28.0 64.3,23.3 62.2,24.0" fill="#e4e8f2" stroke="#3a4a86" stroke-width="0.9"/><polygon points="68.8,27.1 70.9,26.5 69.6,21.7 67.5,22.3" fill="#e4e8f2" stroke="#3a4a86" stroke-width="0.9"/><polygon points="73.8,25.9 76.0,25.5 75.1,20.6 73.0,21.0" fill="#e4e8f2" stroke="#3a4a86" stroke-width="0.9"/><polygon points="78.9,25.1 81.1,24.9 80.7,19.9 78.5,20.1" fill="#e4e8f2" stroke="#3a4a86" stroke-width="0.9"/><text x="85.4" y="35.8" font-size="10.2" font-family="Liberation Sans, sans-serif" text-anchor="middle" dy="3.65" fill="#111">N</text><text x="118.2" y="49.8" font-size="10.2" font-family="Liberation Sans, sans-serif" text-anchor="middle" dy="3.65" fill="#111">NE</text><text x="131.6" y="85.2" font-size="10.2" font-family="Liberation Sans, sans-serif" text-anchor="middle" dy="3.65" fill="#111">E</text><text x="118.6" y="122.6" font-size="10.2" font-family="Liberation Sans, sans-serif" text-anchor="middle" dy="3.65" fill="#111">SE</text><text x="85.8" y="134.6" font-size="10.2" font-family="Liberation Sans, sans-serif" text-anchor="middle" dy="3.65" fill="#111">S</text><text x="56.4" y="122.6" font-size="10.2" font-family="Liberation Sans, sans-serif" text-anchor="middle" dy="3.65" fill="#111">SW</text><text x="38.1" y="85.2" font-size="10.2" font-family="Liberation Sans, sans-serif" text-anchor="middle" dy="3.65" fill="#111">W</text><text x="57.5" y="49.8" font-size="10.2" font-family="Liberation Sans, sans-serif" text-anchor="middle" dy="3.65" fill="#111">NW</text><defs><linearGradient id="ng130" gradientUnits="userSpaceOnUse" x1="81.79" y1="83.21" x2="88.61" y2="84.79"><stop offset="0" stop-color="#e83838"/><stop offset="0.5" stop-color="#ff8c8c"/><stop offset="1" stop-color="#ee4848"/></linearGradient></defs><polygon points="81.8,83.2 99.3,23.1 88.6,84.8" fill="url(#ng130)" stroke="#141414" stroke-width="1.200" stroke-linejoin="miter"/><circle cx="85.2" cy="84.0" r="7.6" fill="url(#hub)" stroke="#1a1a1a" stroke-width="1.3"/></svg>
<svg class="abs" style="left:730px;top:200px;" width="70" height="160" viewBox="730 200 70 160"><defs><linearGradient id="lf" x1="0" y1="0" x2="1" y2="0.3"><stop offset="0" stop-color="#7b8aa0"/><stop offset="0.5" stop-color="#a6b0bc"/><stop offset="1" stop-color="#d2d5d9"/></linearGradient></defs><rect x="733" y="205" width="58" height="147.500" fill="#c0c0c0"/><rect x="733.500" y="205.500" width="57" height="146.500" fill="none" stroke="#d2d2d2" stroke-width="1"/><rect x="735.500" y="207.500" width="53" height="142.500" fill="url(#lf)" stroke="#969696" stroke-width="1"/><rect x="769.500" y="326.3" width="9.500" height="15.7" fill="#0ad42c" stroke="#1c1c1c" stroke-width="0.700"/><rect x="769.500" y="310.6" width="9.500" height="15.7" fill="#ffff00" stroke="#1c1c1c" stroke-width="0.700"/><rect x="769.500" y="294.9" width="9.500" height="15.7" fill="#ff7e00" stroke="#1c1c1c" stroke-width="0.700"/><rect x="769.500" y="279.2" width="9.500" height="15.7" fill="#ff0000" stroke="#1c1c1c" stroke-width="0.700"/><rect x="769.500" y="247.7" width="9.500" height="31.4" fill="#99004c" stroke="#1c1c1c" stroke-width="0.700"/><rect x="769.500" y="216.0" width="9.500" height="31.7" fill="#4c0026" stroke="#1c1c1c" stroke-width="0.700"/><rect x="761.600" y="216.0" width="1.400" height="126" fill="#9aa2ae"/><rect x="758" y="340.9" width="8.500" height="2.200" fill="#fff" stroke="#5a6068" stroke-width="0.600"/><rect x="760" y="338.0" width="4.600" height="1.800" fill="#dfe1e4" stroke="#646a72" stroke-width="0.600"/><rect x="760" y="334.8" width="4.600" height="1.800" fill="#dfe1e4" stroke="#646a72" stroke-width="0.600"/><rect x="760" y="331.7" width="4.600" height="1.800" fill="#dfe1e4" stroke="#646a72" stroke-width="0.600"/><rect x="760" y="328.5" width="4.600" height="1.800" fill="#dfe1e4" stroke="#646a72" stroke-width="0.600"/><rect x="760" y="325.4" width="4.600" height="1.800" fill="#dfe1e4" stroke="#646a72" stroke-width="0.600"/><rect x="760" y="322.2" width="4.600" height="1.800" fill="#dfe1e4" stroke="#646a72" stroke-width="0.600"/><rect x="760" y="319.1" width="4.600" height="1.800" fill="#dfe1e4" stroke="#646a72" stroke-width="0.600"/><rect x="760" y="316.0" width="4.600" height="1.800" fill="#dfe1e4" stroke="#646a72" stroke-width="0.600"/><rect x="760" y="312.8" width="4.600" height="1.800" fill="#dfe1e4" stroke="#646a72" stroke-width="0.600"/><rect x="760" y="309.7" width="4.600" height="1.800" fill="#dfe1e4" stroke="#646a72" stroke-width="0.600"/><rect x="760" y="306.5" width="4.600" height="1.800" fill="#dfe1e4" stroke="#646a72" stroke-width="0.600"/><rect x="758" y="303.2" width="8.500" height="2.200" fill="#fff" stroke="#5a6068" stroke-width="0.600"/><rect x="760" y="300.3" width="4.600" height="1.800" fill="#dfe1e4" stroke="#646a72" stroke-width="0.600"/><rect x="760" y="297.1" width="4.600" height="1.800" fill="#dfe1e4" stroke="#646a72" stroke-width="0.600"/><rect x="760" y="294.0" width="4.600" height="1.800" fill="#dfe1e4" stroke="#646a72" stroke-width="0.600"/><rect x="760" y="290.8" width="4.600" height="1.800" fill="#dfe1e4" stroke="#646a72" stroke-width="0.600"/><rect x="760" y="287.7" width="4.600" height="1.800" fill="#dfe1e4" stroke="#646a72" stroke-width="0.600"/><rect x="760" y="284.5" width="4.600" height="1.800" fill="#dfe1e4" stroke="#646a72" stroke-width="0.600"/><rect x="760" y="281.4" width="4.600" height="1.800" fill="#dfe1e4" stroke="#646a72" stroke-width="0.600"/><rect x="760" y="278.3" width="4.600" height="1.800" fill="#dfe1e4" stroke="#646a72" stroke-width="0.600"/><rect x="760" y="275.1" width="4.600" height="1.800" fill="#dfe1e4" stroke="#646a72" stroke-width="0.600"/><rect x="760" y="272.0" width="4.600" height="1.800" fill="#dfe1e4" stroke="#646a72" stroke-width="0.600"/><rect x="760" y="268.8" width="4.600" height="1.800" fill="#dfe1e4" stroke="#646a72" stroke-width="0.600"/><rect x="758" y="265.5" width="8.500" height="2.200" fill="#fff" stroke="#5a6068" stroke-width="0.600"/><rect x="760" y="262.5" width="4.600" height="1.800" fill="#dfe1e4" stroke="#646a72" stroke-width="0.600"/><rect x="760" y="259.4" width="4.600" height="1.800" fill="#dfe1e4" stroke="#646a72" stroke-width="0.600"/><rect x="760" y="256.3" width="4.600" height="1.800" fill="#dfe1e4" stroke="#646a72" stroke-width="0.600"/><rect x="760" y="253.1" width="4.600" height="1.800" fill="#dfe1e4" stroke="#646a72" stroke-width="0.600"/><rect x="760" y="250.0" width="4.600" height="1.800" fill="#dfe1e4" stroke="#646a72" stroke-width="0.600"/><rect x="760" y="246.8" width="4.600" height="1.800" fill="#dfe1e4" stroke="#646a72" stroke-width="0.600"/><rect x="760" y="243.7" width="4.600" height="1.800" fill="#dfe1e4" stroke="#646a72" stroke-width="0.600"/><rect x="760" y="240.6" width="4.600" height="1.800" fill="#dfe1e4" stroke="#646a72" stroke-width="0.600"/><rect x="760" y="237.4" width="4.600" height="1.800" fill="#dfe1e4" stroke="#646a72" stroke-width="0.600"/><rect x="760" y="234.3" width="4.600" height="1.800" fill="#dfe1e4" stroke="#646a72" stroke-width="0.600"/><rect x="760" y="231.1" width="4.600" height="1.800" fill="#dfe1e4" stroke="#646a72" stroke-width="0.600"/><rect x="758" y="227.8" width="8.500" height="2.200" fill="#fff" stroke="#5a6068" stroke-width="0.600"/><rect x="760" y="224.8" width="4.600" height="1.800" fill="#dfe1e4" stroke="#646a72" stroke-width="0.600"/><rect x="760" y="221.7" width="4.600" height="1.800" fill="#dfe1e4" stroke="#646a72" stroke-width="0.600"/><rect x="760" y="218.6" width="4.600" height="1.800" fill="#dfe1e4" stroke="#646a72" stroke-width="0.600"/><rect x="760" y="215.4" width="4.600" height="1.800" fill="#dfe1e4" stroke="#646a72" stroke-width="0.600"/><text x="753" y="343.9" font-size="7.500" font-family="Liberation Sans, sans-serif" text-anchor="end" fill="#111">0</text><text x="753" y="306.2" font-size="7.500" font-family="Liberation Sans, sans-serif" text-anchor="end" fill="#111">120</text><text x="753" y="268.5" font-size="7.500" font-family="Liberation Sans, sans-serif" text-anchor="end" fill="#111">240</text><text x="753" y="230.8" font-size="7.500" font-family="Liberation Sans, sans-serif" text-anchor="end" fill="#111">360</text><text x="753" y="217.9" font-size="7.500" font-family="Liberation Sans, sans-serif" text-anchor="end" fill="#111">401</text><polygon points="764,334.8 775.500,328.8 775.500,340.8" fill="#f46a6a" stroke="#3a1a1a" stroke-width="0.800"/></svg>
<svg class="abs" style="left:730px;top:425px;" width="70" height="185" viewBox="730 425 70 185"><rect x="735" y="430" width="61" height="176" fill="#c0c0c0"/><rect x="735.500" y="430.500" width="60" height="175" fill="none" stroke="#d2d2d2" stroke-width="1"/><rect x="737.500" y="432.500" width="56" height="171" fill="url(#lf)" stroke="#969696" stroke-width="1"/><path d="M759.300 445.5 Q759.300 444.0 760.800 444.0 L770.200 444.0 Q771.700 444.0 771.700 445.5 L771.700 572 L759.300 572 Z" fill="#fff" stroke="#1a1a1a" stroke-width="1.200"/><rect x="759.900" y="484.8" width="11.200" height="87.2" fill="#f40000"/><circle cx="765.500" cy="579" r="11" fill="#f40000" stroke="#1a1a1a" stroke-width="1.200"/><rect x="759.950" y="566" width="11.100" height="8" fill="#f40000"/><rect x="760.600" y="565.1" width="9.800" height="2.600" rx="0.800" fill="#f2d4d4" stroke="#d86060" stroke-width="0.700"/><rect x="763.200" y="558.1" width="4.800" height="2.200" rx="0.500" fill="#f4b0b0" stroke="#e04848" stroke-width="0.700"/><rect x="763.200" y="550.9" width="4.800" height="2.200" rx="0.500" fill="#f4b0b0" stroke="#e04848" stroke-width="0.700"/><rect x="763.200" y="543.7" width="4.800" height="2.200" rx="0.500" fill="#f4b0b0" stroke="#e04848" stroke-width="0.700"/><rect x="763.200" y="536.5" width="4.800" height="2.200" rx="0.500" fill="#f4b0b0" stroke="#e04848" stroke-width="0.700"/><rect x="760.600" y="529.1" width="9.800" height="2.600" rx="0.800" fill="#f2d4d4" stroke="#d86060" stroke-width="0.700"/><rect x="763.200" y="522.1" width="4.800" height="2.200" rx="0.500" fill="#f4b0b0" stroke="#e04848" stroke-width="0.700"/><rect x="763.200" y="514.9" width="4.800" height="2.200" rx="0.500" fill="#f4b0b0" stroke="#e04848" stroke-width="0.700"/><rect x="763.200" y="507.7" width="4.800" height="2.200" rx="0.500" fill="#f4b0b0" stroke="#e04848" stroke-width="0.700"/><rect x="763.200" y="500.5" width="4.800" height="2.200" rx="0.500" fill="#f4b0b0" stroke="#e04848" stroke-width="0.700"/><rect x="760.600" y="493.1" width="9.800" height="2.600" rx="0.800" fill="#f2d4d4" stroke="#d86060" stroke-width="0.700"/><rect x="763.200" y="486.1" width="4.800" height="2.200" rx="0.500" fill="#f4b0b0" stroke="#e04848" stroke-width="0.700"/><rect x="763.200" y="478.9" width="4.800" height="2.200" rx="0.500" fill="#c4c4c4" stroke="#404040" stroke-width="0.700"/><rect x="763.200" y="471.7" width="4.800" height="2.200" rx="0.500" fill="#c4c4c4" stroke="#404040" stroke-width="0.700"/><rect x="763.200" y="464.5" width="4.800" height="2.200" rx="0.500" fill="#c4c4c4" stroke="#404040" stroke-width="0.700"/><rect x="760.600" y="457.1" width="9.800" height="2.600" rx="0.800" fill="#dcdcdc" stroke="#484848" stroke-width="0.700"/><rect x="763.200" y="450.1" width="4.800" height="2.200" rx="0.500" fill="#c4c4c4" stroke="#404040" stroke-width="0.700"/><rect x="762.300" y="443.4" width="6.400" height="2.200" rx="1" fill="#e0e0e0" stroke="#444" stroke-width="0.700"/><text x="757.300" y="568.7" font-size="7.600" font-family="Liberation Sans, sans-serif" text-anchor="end" fill="#111">0</text><text x="757.300" y="532.7" font-size="7.600" font-family="Liberation Sans, sans-serif" text-anchor="end" fill="#111">15</text><text x="757.300" y="496.7" font-size="7.600" font-family="Liberation Sans, sans-serif" text-anchor="end" fill="#111">30</text><text x="757.300" y="460.7" font-size="7.600" font-family="Liberation Sans, sans-serif" text-anchor="end" fill="#111">45</text><text x="757.300" y="446.3" font-size="7.600" font-family="Liberation Sans, sans-serif" text-anchor="end" fill="#111">51</text></svg>
<svg class="abs" style="left:215px;top:428px;" width="505" height="204" viewBox="215 428 505 204"><rect x="217.500" y="431.500" width="499" height="197.500" fill="#fff" stroke="#808080" stroke-width="1"/><rect x="226.500" y="439.500" width="483" height="130" rx="9" ry="9" fill="#fff" stroke="#9c9c9c" stroke-width="1.400"/><line x1="290.3" x2="669.1" y1="509.6" y2="509.6" stroke="#bcbcbc" stroke-width="1" stroke-dasharray="3 1.2"/><line x1="290.3" x2="669.1" y1="496.0" y2="496.0" stroke="#bcbcbc" stroke-width="1" stroke-dasharray="3 1.2"/><line x1="290.3" x2="669.1" y1="482.5" y2="482.5" stroke="#bcbcbc" stroke-width="1" stroke-dasharray="3 1.2"/><line x1="290.3" x2="669.1" y1="468.9" y2="468.9" stroke="#bcbcbc" stroke-width="1" stroke-dasharray="3 1.2"/><line x1="290.3" x2="669.1" y1="455.3" y2="455.3" stroke="#bcbcbc" stroke-width="1" stroke-dasharray="3 1.2"/><line x1="337.7" x2="337.7" y1="455.3" y2="523.2" stroke="#c8c8c8" stroke-width="1.600"/><line x1="385.0" x2="385.0" y1="455.3" y2="523.2" stroke="#c8c8c8" stroke-width="1.600"/><line x1="432.4" x2="432.4" y1="455.3" y2="523.2" stroke="#c8c8c8" stroke-width="1.600"/><line x1="479.7" x2="479.7" y1="455.3" y2="523.2" stroke="#c8c8c8" stroke-width="1.600"/><line x1="527.0" x2="527.0" y1="455.3" y2="523.2" stroke="#c8c8c8" stroke-width="1.600"/><line x1="574.4" x2="574.4" y1="455.3" y2="523.2" stroke="#c8c8c8" stroke-width="1.600"/><line x1="621.8" x2="621.8" y1="455.3" y2="523.2" stroke="#c8c8c8" stroke-width="1.600"/><line x1="669.1" x2="669.1" y1="455.3" y2="523.2" stroke="#c8c8c8" stroke-width="1.600"/><g fill="none" stroke-width="3" stroke-linejoin="round"><polyline points="290.3,509.6 306.1,509.6 321.9,509.6 337.7,509.6 353.4,509.6 369.2,509.6 385.0,509.6 400.8,509.6 416.6,509.6 432.4,509.6 448.1,509.6 463.9,509.6 479.7,509.6 495.5,509.6 511.3,509.6 527.0,509.6 542.8,509.6 558.6,509.6 574.4,509.6 590.2,509.6 606.0,509.6 621.8,509.6 637.5,509.6 653.3,509.6 669.1,509.6" stroke="#0000c0"/><polyline points="290.3,505.5 306.1,505.5 321.9,505.5 337.7,505.5 353.4,505.5 369.2,505.5 385.0,505.5 400.8,505.5 416.6,505.5 432.4,505.5 448.1,505.5 463.9,505.5 479.7,505.5 495.5,505.5 511.3,505.5 527.0,505.5 542.8,505.5 558.6,505.5 574.4,505.5 590.2,505.5 606.0,505.5 621.8,505.5 637.5,505.5 653.3,505.5 669.1,505.5" stroke="#b00000"/><polyline points="290.3,498.3 306.1,498.5 321.9,497.9 337.7,496.7 353.4,499.8 369.2,501.2 385.0,501.7 400.8,501.9 416.6,501.9 432.4,501.7 448.1,501.7 463.9,501.5 479.7,500.9 495.5,500.4 511.3,499.6 527.0,498.7 542.8,498.2 558.6,497.7 574.4,496.4 590.2,496.0 606.0,496.0 621.8,496.0 637.5,496.0 653.3,496.0 669.1,496.0" stroke="#d2f020"/><polyline points="290.3,509.6 306.1,509.6 321.9,509.6 337.7,509.6 353.4,509.6 369.2,509.5 385.0,509.5 400.8,509.6 416.6,509.6 432.4,509.6 448.1,509.6 463.9,509.6 479.7,509.6 495.5,509.6 511.3,509.6 527.0,509.6 542.8,509.6 558.6,509.6 574.4,509.6 590.2,509.6 606.0,509.6 621.8,509.6 637.5,509.6 653.3,509.6 669.1,509.6" stroke="#a02868"/><polyline points="290.3,507.0 306.1,507.0 321.9,507.0 337.7,506.6 353.4,505.8 369.2,505.1 385.0,504.4 400.8,504.0 416.6,503.8 432.4,503.6 448.1,503.8 463.9,504.0 479.7,504.4 495.5,504.7 511.3,504.9 527.0,505.0 542.8,505.0 558.6,505.1 574.4,505.1 590.2,505.1 606.0,505.1 621.8,505.1 637.5,505.1 653.3,505.0 669.1,505.0" stroke="#20c8e8"/><polyline points="290.3,508.9 306.1,508.9 321.9,508.9 337.7,509.3 353.4,510.1 369.2,508.9 385.0,508.9 400.8,508.9 416.6,508.9 432.4,508.8 448.1,508.5 463.9,509.3 479.7,510.1 495.5,508.9 511.3,509.1 527.0,509.1 542.8,509.1 558.6,509.3 574.4,510.1 590.2,510.1 606.0,509.1 621.8,509.1 637.5,509.1 653.3,509.1 669.1,509.1" stroke="#e818c8"/><polyline points="290.3,463.1 306.1,460.7 321.9,465.4 337.7,460.7 353.4,506.2 369.2,492.9 385.0,503.5 400.8,505.5 416.6,506.2 432.4,506.6 448.1,506.2 463.9,506.9 479.7,505.8 495.5,506.6 511.3,506.9 527.0,506.2 542.8,506.9 558.6,505.8 574.4,506.2 590.2,506.9 606.0,507.2 621.8,507.4 637.5,507.6 653.3,507.7 669.1,507.8" stroke="#22e0b0"/><polyline points="290.3,508.9 306.1,508.9 321.9,508.9 337.7,508.9 353.4,508.9 369.2,508.9 385.0,508.9 400.8,508.9 416.6,508.9 432.4,508.8 448.1,508.5 463.9,508.5 479.7,508.8 495.5,508.9 511.3,509.1 527.0,509.1 542.8,509.1 558.6,509.1 574.4,509.1 590.2,509.1 606.0,509.1 621.8,509.1 637.5,509.1 653.3,509.1 669.1,509.1" stroke="#86f020"/></g><line x1="290.3" x2="290.3" y1="454.3" y2="524.2" stroke="#000" stroke-width="2"/><line x1="289.3" x2="670.1" y1="523.2" y2="523.2" stroke="#000" stroke-width="2"/><line x1="284.3" x2="290.3" y1="523.2" y2="523.2" stroke="#000" stroke-width="1.600"/><line x1="286.3" x2="290.3" y1="516.4" y2="516.4" stroke="#000" stroke-width="1.600"/><line x1="284.3" x2="290.3" y1="509.6" y2="509.6" stroke="#000" stroke-width="1.600"/><line x1="286.3" x2="290.3" y1="502.8" y2="502.8" stroke="#000" stroke-width="1.600"/><line x1="284.3" x2="290.3" y1="496.0" y2="496.0" stroke="#000" stroke-width="1.600"/><line x1="286.3" x2="290.3" y1="489.2" y2="489.2" stroke="#000" stroke-width="1.600"/><line x1="284.3" x2="290.3" y1="482.5" y2="482.5" stroke="#000" stroke-width="1.600"/><line x1="286.3" x2="290.3" y1="475.7" y2="475.7" stroke="#000" stroke-width="1.600"/><line x1="284.3" x2="290.3" y1="468.9" y2="468.9" stroke="#000" stroke-width="1.600"/><line x1="286.3" x2="290.3" y1="462.1" y2="462.1" stroke="#000" stroke-width="1.600"/><line x1="284.3" x2="290.3" y1="455.3" y2="455.3" stroke="#000" stroke-width="1.600"/><line x1="290.3" x2="290.3" y1="523.2" y2="529.2" stroke="#000" stroke-width="1.600"/><line x1="314.0" x2="314.0" y1="519.2" y2="523.2" stroke="#000" stroke-width="1.600"/><line x1="337.7" x2="337.7" y1="523.2" y2="529.2" stroke="#000" stroke-width="1.600"/><line x1="361.3" x2="361.3" y1="519.2" y2="523.2" stroke="#000" stroke-width="1.600"/><line x1="385.0" x2="385.0" y1="523.2" y2="529.2" stroke="#000" stroke-width="1.600"/><line x1="408.7" x2="408.7" y1="519.2" y2="523.2" stroke="#000" stroke-width="1.600"/><line x1="432.4" x2="432.4" y1="523.2" y2="529.2" stroke="#000" stroke-width="1.600"/><line x1="456.0" x2="456.0" y1="519.2" y2="523.2" stroke="#000" stroke-width="1.600"/><line x1="479.7" x2="479.7" y1="523.2" y2="529.2" stroke="#000" stroke-width="1.600"/><line x1="503.4" x2="503.4" y1="519.2" y2="523.2" stroke="#000" stroke-width="1.600"/><line x1="527.0" x2="527.0" y1="523.2" y2="529.2" stroke="#000" stroke-width="1.600"/><line x1="550.7" x2="550.7" y1="519.2" y2="523.2" stroke="#000" stroke-width="1.600"/><line x1="574.4" x2="574.4" y1="523.2" y2="529.2" stroke="#000" stroke-width="1.600"/><line x1="598.1" x2="598.1" y1="519.2" y2="523.2" stroke="#000" stroke-width="1.600"/><line x1="621.8" x2="621.8" y1="523.2" y2="529.2" stroke="#000" stroke-width="1.600"/><line x1="645.4" x2="645.4" y1="519.2" y2="523.2" stroke="#000" stroke-width="1.600"/><line x1="669.1" x2="669.1" y1="523.2" y2="529.2" stroke="#000" stroke-width="1.600"/><text x="278.8" y="527.0" font-family="Liberation Sans, sans-serif" font-size="10.600" fill="#000" text-anchor="end">-100</text><text x="278.8" y="513.4" font-family="Liberation Sans, sans-serif" font-size="10.600" fill="#000" text-anchor="end">0</text><text x="278.8" y="499.8" font-family="Liberation Sans, sans-serif" font-size="10.600" fill="#000" text-anchor="end">100</text><text x="278.8" y="486.3" font-family="Liberation Sans, sans-serif" font-size="10.600" fill="#000" text-anchor="end">200</text><text x="278.8" y="472.7" font-family="Liberation Sans, sans-serif" font-size="10.600" fill="#000" text-anchor="end">300</text><text x="278.8" y="459.1" font-family="Liberation Sans, sans-serif" font-size="10.600" fill="#000" text-anchor="end">400</text><text x="290.3" y="543.500" font-family="Liberation Sans, sans-serif" font-size="10.600" fill="#000" text-anchor="middle">6:00 AM</text><text x="337.7" y="543.500" font-family="Liberation Sans, sans-serif" font-size="10.600" fill="#000" text-anchor="middle">9:00 AM</text><text x="385.0" y="543.500" font-family="Liberation Sans, sans-serif" font-size="10.600" fill="#000" text-anchor="middle">12:00 PM</text><text x="432.4" y="543.500" font-family="Liberation Sans, sans-serif" font-size="10.600" fill="#000" text-anchor="middle">3:00 PM</text><text x="479.7" y="543.500" font-family="Liberation Sans, sans-serif" font-size="10.600" fill="#000" text-anchor="middle">6:00 PM</text><text x="527.0" y="543.500" font-family="Liberation Sans, sans-serif" font-size="10.600" fill="#000" text-anchor="middle">9:00 PM</text><text x="574.4" y="543.500" font-family="Liberation Sans, sans-serif" font-size="10.600" fill="#000" text-anchor="middle">12:00 AM</text><text x="621.8" y="543.500" font-family="Liberation Sans, sans-serif" font-size="10.600" fill="#000" text-anchor="middle">3:00 AM</text><text x="669.1" y="543.500" font-family="Liberation Sans, sans-serif" font-size="10.600" fill="#000" text-anchor="middle">6:00 AM</text><text x="480" y="556.500" font-family="Liberation Sans, sans-serif" font-size="10.600" fill="#000" text-anchor="middle">Time</text><text x="252.500" y="489" font-family="Liberation Sans, sans-serif" font-size="10.600" fill="#000" text-anchor="middle" transform="rotate(-90 252.500 489)">Value</text><rect x="272.500" y="577" width="390" height="42" fill="#f0f0f0"/><line x1="275" x2="305" y1="584" y2="584" stroke="#0000c0" stroke-width="3"/><text x="310" y="587.8" font-family="Liberation Sans, sans-serif" font-size="10.600" fill="#000">O3[ppm]</text><line x1="406" x2="435" y1="584" y2="584" stroke="#b00000" stroke-width="3"/><text x="440" y="587.8" font-family="Liberation Sans, sans-serif" font-size="10.600" fill="#000">BP[in Hg]</text><line x1="536" x2="565" y1="584" y2="584" stroke="#d2f020" stroke-width="3"/><text x="570" y="587.8" font-family="Liberation Sans, sans-serif" font-size="10.600" fill="#000">RH[%]</text><line x1="275" x2="305" y1="598" y2="598" stroke="#a02868" stroke-width="3"/><text x="310" y="601.8" font-family="Liberation Sans, sans-serif" font-size="10.600" fill="#000">SOLAR[Langleys]</text><line x1="406" x2="435" y1="598" y2="598" stroke="#20c8e8" stroke-width="3"/><text x="440" y="601.8" font-family="Liberation Sans, sans-serif" font-size="10.600" fill="#000">TEMP[DegF]</text><line x1="536" x2="565" y1="598" y2="598" stroke="#e818c8" stroke-width="3"/><text x="570" y="601.8" font-family="Liberation Sans, sans-serif" font-size="10.600" fill="#000">WSPD[mph]</text><line x1="275" x2="305" y1="612" y2="612" stroke="#22e0b0" stroke-width="3"/><text x="310" y="615.8" font-family="Liberation Sans, sans-serif" font-size="10.600" fill="#000">WDIR[Deg]</text><line x1="406" x2="435" y1="612" y2="612" stroke="#86f020" stroke-width="3"/><text x="440" y="615.8" font-family="Liberation Sans, sans-serif" font-size="10.600" fill="#000">PM2.5[µg/m3]</text></svg>
<div class="abs" style="left:217px;top:634px;width:500px;text-align:center;font-style:italic;font-size:16px;line-height:20px;color:#000;white-space:nowrap;">Click On Monitor In The Table To View it's Graph</div>
<div class="abs" style="left:839px;top:121px;width:17px;height:555px;background:#f9f8f4;"></div>
<div class="abs" style="left:856px;top:121px;width:2px;height:555px;background:#fdfdfb;"></div>
<div class="abs" style="left:839px;top:121px;width:17px;height:17px;box-sizing:border-box;background:#f4f3ee;border-top:1px solid #fdfdfb;border-left:1px solid #fbfaf6;border-right:1px solid #2a2a2a;border-bottom:1px solid #2a2a2a;"></div>
<div class="abs" style="left:840px;top:122px;width:15px;height:15px;box-sizing:border-box;border-right:1px solid #8a8880;border-bottom:1px solid #8a8880;"></div>
<div class="abs" style="left:839px;top:138px;width:17px;height:513px;box-sizing:border-box;background:#f4f3ee;border-top:1px solid #fdfdfb;border-left:1px solid #fbfaf6;border-right:1px solid #2a2a2a;border-bottom:1px solid #2a2a2a;"></div>
<div class="abs" style="left:840px;top:139px;width:15px;height:511px;box-sizing:border-box;border-right:1px solid #8a8880;border-bottom:1px solid #8a8880;"></div>
<div class="abs" style="left:839px;top:658px;width:17px;height:17px;box-sizing:border-box;background:#f4f3ee;border-top:1px solid #fdfdfb;border-left:1px solid #fbfaf6;border-right:1px solid #2a2a2a;border-bottom:1px solid #2a2a2a;"></div>
<div class="abs" style="left:840px;top:659px;width:15px;height:15px;box-sizing:border-box;border-right:1px solid #8a8880;border-bottom:1px solid #8a8880;"></div>
<svg class="abs" style="left:843px;top:126px;" width="9" height="6"><path d="M0.500 5 L4.500 1 L8.500 5 Z" fill="#000"/></svg>
<svg class="abs" style="left:843px;top:664px;" width="9" height="6"><path d="M0.500 1 L8.500 1 L4.500 5 Z" fill="#000"/></svg>

</body>
</html>
